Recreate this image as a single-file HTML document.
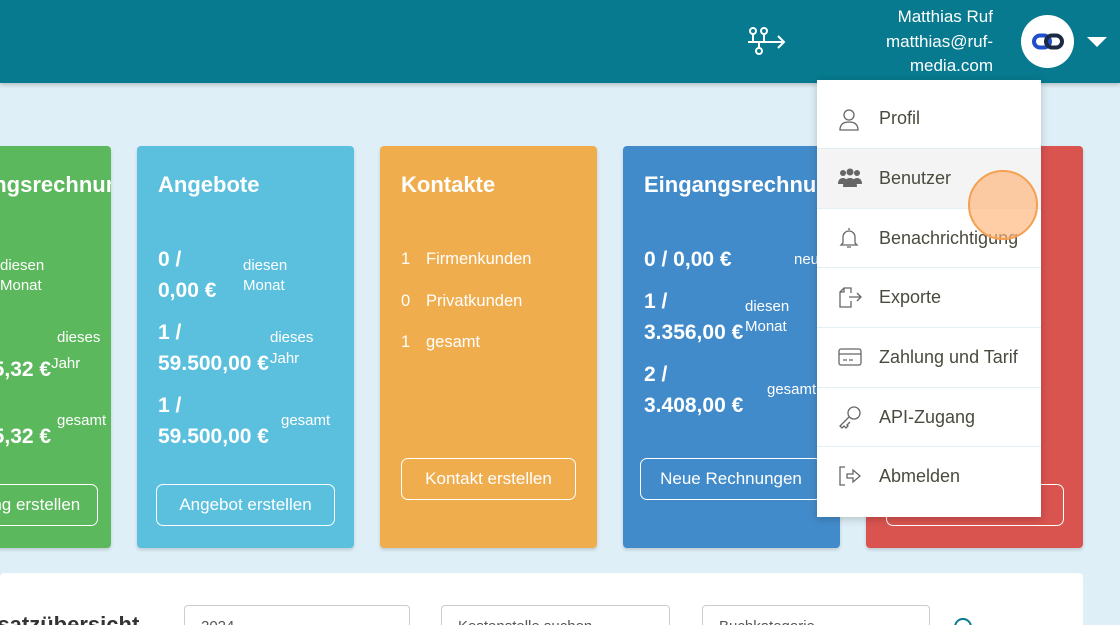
<!DOCTYPE html>
<html><head><meta charset="utf-8"><style>
*{margin:0;padding:0;box-sizing:border-box}
html,body{width:1120px;height:625px;overflow:hidden}
body{background:#dfeff7;font-family:"Liberation Sans",sans-serif;position:relative}
#w{position:absolute;left:0;top:0;width:1120px;height:625px;overflow:hidden}
.hdr{position:absolute;left:0;top:0;width:1120px;height:83px;background:#077a8f;box-shadow:0 2px 4px rgba(0,0,0,.2)}
.user{position:absolute;right:127px;top:5px;text-align:right;color:#fff;font-size:17px;line-height:24.5px}
.av{position:absolute;left:1021px;top:15px;width:53px;height:53px;border-radius:50%;background:#fff}
.tri{position:absolute;left:1087px;top:37px;width:0;height:0;border-left:10px solid transparent;border-right:10px solid transparent;border-top:10px solid #fff}
.card{position:absolute;top:146px;width:217px;height:402px;border-radius:4px;color:#fff;box-shadow:0 2px 3px rgba(0,0,0,.15)}
.card h2{position:absolute;left:21px;top:26px;font-size:22px;font-weight:bold;white-space:nowrap}
.b{position:absolute;font-size:21px;font-weight:bold;line-height:31px;white-space:nowrap}
.s{position:absolute;font-size:15px;line-height:20px}
.k{position:absolute;font-size:16.5px;line-height:41.5px}
.btn{position:absolute;border:1.5px solid #fff;border-radius:7px;height:42px;font-size:17px;line-height:39px;text-align:center;white-space:nowrap;overflow:hidden}
.menu{position:absolute;left:817px;top:80px;width:224px;height:437px;background:#fff;box-shadow:0 2px 8px rgba(0,0,0,.2)}
.mi{height:59.7px;border-bottom:1px solid #e4eef3;position:relative;font-size:18px;color:#4a4a3e}
.mi span{position:absolute;left:62px;top:19px}
.mi svg{position:absolute;left:20px;top:17px}
.panel{position:absolute;left:0;top:573px;width:1083px;height:60px;background:#fff;border-radius:4px}
.inp{position:absolute;top:605px;height:30px;border:1px solid #ccc;border-radius:4px;background:#fff;font-size:15px;color:#555;padding:12px 0 0 16px}
</style></head><body><div id="w">
<div class="hdr">
<svg style="position:absolute;left:746px;top:26px" width="40" height="30" viewBox="0 0 40 30" fill="none" stroke="#fff" stroke-width="2"><circle cx="7" cy="5" r="3"/><circle cx="18" cy="5" r="3"/><circle cx="13" cy="25" r="3"/><path d="M7 8v8M18 8v8M13 16v6M2 16h36M32 10l6 6-6 6"/></svg>
<div class="user">Matthias Ruf<br>matthias@ruf-<br>media.com</div>
<div class="av"><svg style="position:absolute;left:11px;top:18px" width="32" height="17" viewBox="0 0 32 17"><rect x="2" y="2.5" width="16" height="12" rx="6" fill="none" stroke="#1f4fc9" stroke-width="4"/><rect x="14" y="2.5" width="16" height="12" rx="6" fill="none" stroke="#1d2a45" stroke-width="4"/></svg></div>
<div class="tri"></div>
</div>

<div class="card" style="left:-106px;background:#5cb85c;overflow:hidden">
<h2 style="left:32px">Ausgangsrechnung</h2>
<div class="s" style="left:106px;top:110px">diesen<br>Monat</div>
<div class="s" style="left:163px;top:182px">dieses</div>
<div class="b" style="left:87px;top:202px">25,32 €<sup style="font-size:15px;font-weight:normal">Jahr</sup></div>
<div class="s" style="left:163px;top:265px">gesamt</div>
<div class="b" style="left:87px;top:275px">25,32 €</div>
<div class="btn" style="left:30px;top:338px;width:174px;text-indent:-8px">Rechnung erstellen</div>
</div>

<div class="card" style="left:137px;background:#5bc0de">
<h2>Angebote</h2>
<div class="b" style="left:21px;top:98px">0 /<br>0,00 €</div>
<div class="s" style="left:106px;top:110px">diesen<br>Monat</div>
<div class="b" style="left:21px;top:171px">1 /<br>59.500,00 €</div>
<div class="s" style="left:133px;top:182px">dieses</div>
<div class="s" style="left:133px;top:203px">Jahr</div>
<div class="b" style="left:21px;top:244px">1 /<br>59.500,00 €</div>
<div class="s" style="left:144px;top:265px">gesamt</div>
<div class="btn" style="left:19px;top:338px;width:179px">Angebot erstellen</div>
</div>

<div class="card" style="left:380px;background:#f0ad4e">
<h2>Kontakte</h2>
<div class="k" style="left:21px;top:93px">1<br>0<br>1</div>
<div class="k" style="left:46px;top:93px">Firmenkunden<br>Privatkunden<br>gesamt</div>
<div class="btn" style="left:21px;top:312px;width:175px">Kontakt erstellen</div>
</div>

<div class="card" style="left:623px;background:#428bca;overflow:hidden">
<h2>Eingangsrechnungen</h2>
<div class="b" style="left:21px;top:98px">0 / 0,00 €</div>
<div class="s" style="left:171px;top:104px">neu</div>
<div class="b" style="left:21px;top:140px">1 /<br>3.356,00 €</div>
<div class="s" style="left:122px;top:151px">diesen<br>Monat</div>
<div class="b" style="left:21px;top:213px">2 /<br>3.408,00 €</div>
<div class="s" style="left:144px;top:234px">gesamt</div>
<div class="btn" style="left:17px;top:312px;width:182px">Neue Rechnungen</div>
</div>

<div class="card" style="left:866px;background:#d9534f">
<div class="btn" style="left:20px;top:338px;width:178px"></div>
</div>

<div class="panel"></div>
<div style="position:absolute;left:-38px;top:612px;font-size:22px;font-weight:bold;color:#333">Umsatzübersicht</div>
<div class="inp" style="left:184px;width:226px">2024</div>
<div class="inp" style="left:441px;width:229px">Kostenstelle suchen</div>
<div class="inp" style="left:702px;width:228px">Buchkategorie</div>
<svg style="position:absolute;left:951px;top:615px" width="24" height="24" viewBox="0 0 24 24" fill="none" stroke="#077a8f" stroke-width="2"><circle cx="12" cy="12" r="8"/></svg>

<div class="menu">
<div class="mi" style="height:69px"><svg style="top:28px" width="24" height="24" viewBox="0 0 24 24" fill="none" stroke="#666" stroke-width="1.3"><circle cx="12" cy="7" r="5"/><path d="M3 22c0-6 4-8 9-8s9 2 9 8z"/></svg><span style="top:28px">Profil</span></div>
<div class="mi" style="background:#f4f4f4"><svg width="26" height="24" viewBox="0 0 26 24" fill="#666"><circle cx="6" cy="7" r="3"/><circle cx="20" cy="7" r="3"/><circle cx="13" cy="6" r="3.5"/><path d="M1 18c0-4 2-6 5-6s4 2 4 6zM16 18c0-4 1-6 4-6s5 2 5 6zM6 21c0-6 3-9 7-9s7 3 7 9z"/></svg><span>Benutzer</span></div>
<div class="mi"><svg width="24" height="24" viewBox="0 0 24 24" fill="none" stroke="#666" stroke-width="1.3"><path d="M12 2v2M6 17V11a6 6 0 0 1 12 0v6l2 2H4zM10 21h4"/></svg><span>Benachrichtigung</span></div>
<div class="mi"><svg width="26" height="24" viewBox="0 0 26 24" fill="none" stroke="#666" stroke-width="1.3"><path d="M14 8V3H7L3 7v15h11v-6M3 7h4V3M12 12h12M20 8l4 4-4 4"/></svg><span>Exporte</span></div>
<div class="mi"><svg width="26" height="24" viewBox="0 0 26 24" fill="none" stroke="#666" stroke-width="1.3"><rect x="2" y="4" width="22" height="16" rx="2"/><path d="M2 9h22M6 15h4M12 15h4"/></svg><span>Zahlung und Tarif</span></div>
<div class="mi"><svg width="26" height="24" viewBox="0 0 26 24" fill="none" stroke="#666" stroke-width="1.3"><circle cx="17" cy="8" r="6"/><path d="M12 12L3 21l2 2 2-2 2 2 2-2-1-1 3-3"/></svg><span>API-Zugang</span></div>
<div class="mi" style="border:0"><svg width="26" height="24" viewBox="0 0 26 24" fill="none" stroke="#666" stroke-width="1.3"><path d="M8 3H3v18h5M10 10h6V6l7 6-7 6v-4h-6z"/></svg><span>Abmelden</span></div>
</div>
<div style="position:absolute;left:968px;top:170px;width:70px;height:70px;border-radius:50%;background:rgba(255,180,120,.65);border:2px solid #f4a050"></div>
</div></body></html>
